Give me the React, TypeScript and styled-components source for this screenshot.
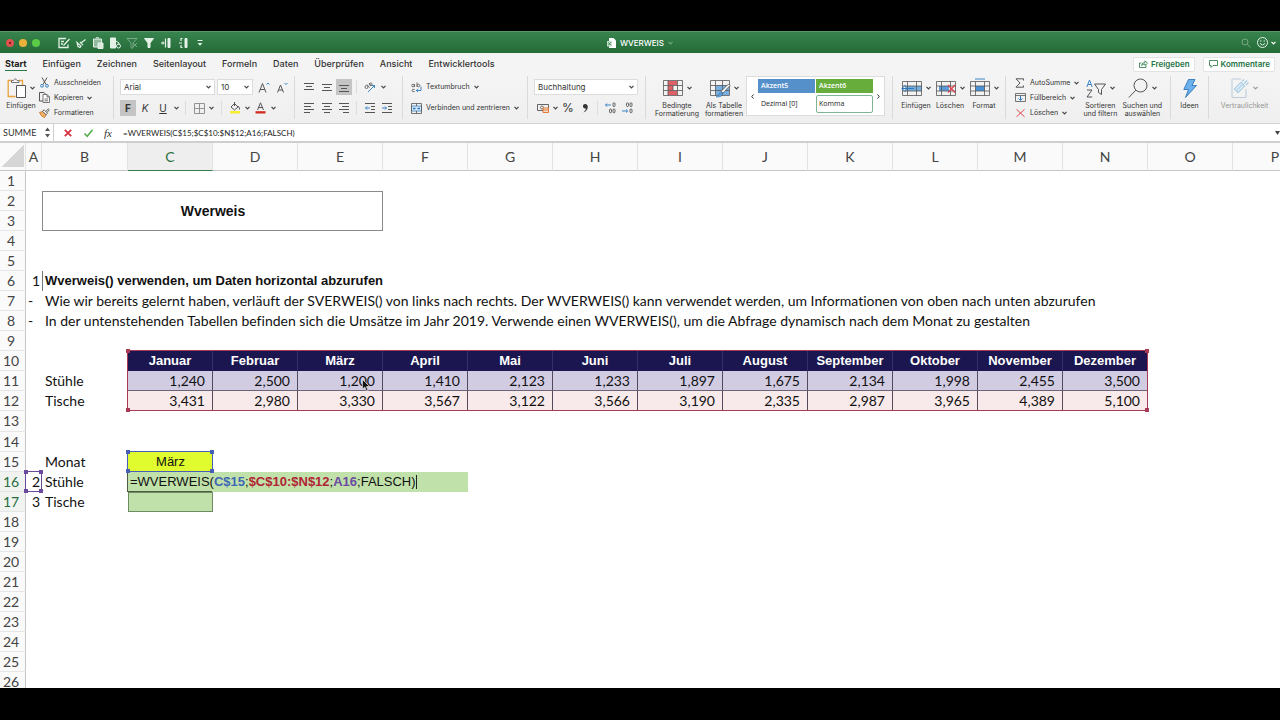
import React from "react";
import styled, { createGlobalStyle, css } from "styled-components";

const UI = `Inter, Roboto, "Liberation Sans", sans-serif`;
const BODY = `Lato, "Open Sans", sans-serif`;
const ARIAL = `"Liberation Sans", Arial, sans-serif`;
const COL = 85;
const ROW = 20;

const GlobalStyle = createGlobalStyle`
  *, *::before, *::after { box-sizing: border-box; }
  body { margin: 0; background: #000; font-family: ${UI}; color: #333; }
  button, select, input { font: inherit; color: inherit; margin: 0; padding: 0; border: 0; background: none; }
  svg { display: block; flex: none; overflow: visible; }
`;

const Screen = styled.div`
  height: 100vh;
  padding: 31px 0 32px;
  display: flex;
  flex-direction: column;
  overflow: hidden;
`;

/* ---------- title bar ---------- */

const TitleBar = styled.header`
  flex: none;
  height: 22px;
  display: grid;
  grid-template-columns: 1fr auto 1fr;
  align-items: center;
  background: linear-gradient(#38834e, #246b38);
  border-top: 1px solid #5a9a6b;
  color: #fff;
`;
const TitleLeft = styled.div`
  display: flex;
  align-items: center;
`;
const Lights = styled.div`
  display: flex;
  gap: 5px;
  padding: 0 15px 0 6px;
`;
const Light = styled.button<{ $color: string }>`
  width: 8px;
  height: 8px;
  border-radius: 50%;
  background: ${(p) => p.$color};
  display: grid;
  place-items: center;
`;
const QuickButton = styled.button<{ $dim?: boolean }>`
  width: 17px;
  height: 16px;
  display: grid;
  place-items: center;
  color: #e4f1e7;
  opacity: ${(p) => (p.$dim ? 0.4 : 1)};
`;
const DocTitle = styled.div`
  display: flex;
  align-items: center;
  gap: 4px;
  font-size: 8px;
  font-weight: 500;
  line-height: 12px;
`;
const TitleRight = styled.div`
  display: flex;
  justify-content: flex-end;
  align-items: center;
  padding-right: 4px;
`;

/* ---------- tabs ---------- */

const TabBar = styled.nav`
  flex: none;
  height: 22px;
  display: flex;
  align-items: center;
  gap: 16px;
  padding: 0 5px;
  background: #f4f4f4;
  font-size: 9px;
  font-weight: 500;
`;
const Tab = styled.button<{ $active?: boolean }>`
  height: 14px;
  line-height: 12px;
  white-space: nowrap;
  border-bottom: 1px solid ${(p) => (p.$active ? "#2b7a45" : "transparent")};
  ${(p) => p.$active && css`font-weight: 700; color: #222;`}
`;
const ShareArea = styled.div`
  margin-left: auto;
  display: flex;
  gap: 8px;
  font-size: 8px;
`;
const ShareButton = styled.button`
  height: 15px;
  padding: 0 4px 0 5px;
  display: flex;
  align-items: center;
  gap: 3px;
  background: #fff;
  border: 1px solid #e3e3e3;
  border-radius: 2px;
  color: #24733f;
  font-weight: 600;
  white-space: nowrap;
`;

/* ---------- ribbon ---------- */

const Ribbon = styled.div`
  flex: none;
  height: 49px;
  display: flex;
  padding: 1px 0 4px;
  background: linear-gradient(#f4f4f4, #efefef);
  border-bottom: 1px solid #d2d2d2;
  font-size: 8px;
  line-height: 10px;
`;
const Group = styled.section<{ $w: number; $pad?: number }>`
  flex: none;
  width: ${(p) => p.$w}px;
  display: flex;
  padding-left: ${(p) => p.$pad ?? 0}px;
  border-right: 1px solid #dadada;
`;
const LastGroup = styled.section`
  flex: 1;
  display: flex;
  justify-content: center;
`;
const Stack = styled.div<{ $gap?: number }>`
  display: flex;
  flex-direction: column;
  justify-content: center;
  gap: ${(p) => p.$gap ?? 4}px;
`;
const Line = styled.div`
  height: 17px;
  display: flex;
  align-items: center;
`;
const Slot = styled.button<{ $w: number; $on?: boolean; $size?: number }>`
  flex: none;
  width: ${(p) => p.$w}px;
  height: 16px;
  display: grid;
  place-items: center;
  font-size: ${(p) => p.$size ?? 10}px;
  background: ${(p) => (p.$on ? "#c4c4c4" : "none")};
`;
const Tick = styled.span<{ $m?: number }>`
  width: 1px;
  height: 14px;
  margin: 0 ${(p) => p.$m ?? 4}px;
  background: #dcdcdc;
`;
const BigButton = styled.button<{ $w: number; $faded?: boolean }>`
  flex: none;
  width: ${(p) => p.$w}px;
  padding-top: 1px;
  display: flex;
  flex-direction: column;
  align-items: center;
  gap: 3px;
  font-size: 7px;
  line-height: 8px;
  white-space: nowrap;
  opacity: ${(p) => (p.$faded ? 0.5 : 1)};
`;
const BigArt = styled.span`
  height: 22px;
  display: flex;
  align-items: center;
  gap: 4px;
`;
const TextButton = styled.button`
  height: 11px;
  display: flex;
  align-items: center;
  gap: 4px;
  font-size: 7px;
  white-space: nowrap;
`;
const IconSlot = styled.span`
  width: 12px;
  display: grid;
  place-items: center;
`;
const SelectWrap = styled.label<{ $w: number }>`
  position: relative;
  width: ${(p) => p.$w}px;
  margin-right: 2px;
  height: 16px;
  display: flex;
  align-items: center;
  background: #fff;
  border: 1px solid #dcdcdc;
  & > svg { position: absolute; right: 3px; pointer-events: none; }
`;
const Select = styled.select`
  appearance: none;
  width: 100%;
  height: 14px;
  padding-left: 3px;
  font-size: 8px;
  outline: none;
`;
const Gallery = styled.div`
  width: 139px;
  height: 40px;
  display: flex;
  background: #fff;
  border: 1px solid #dcdcdc;
`;
const GalleryItems = styled.div`
  flex: 1;
  display: grid;
  grid-template-columns: 1fr 1fr;
  grid-template-rows: 14px 18px;
  column-gap: 1px;
  row-gap: 2px;
  align-content: center;
`;
const Arrow = styled.button`
  width: 11px;
  display: grid;
  place-items: center;
`;
const StyleCell = styled.button<{ $bg?: string; $ring?: boolean }>`
  padding: 0 2px;
  text-align: left;
  font-size: 7px;
  line-height: 10px;
  font-family: "Open Sans", sans-serif;
  font-weight: ${(p) => (p.$bg ? 600 : 500)};
  color: ${(p) => (p.$bg ? "#fff" : "#222")};
  background: ${(p) => p.$bg ?? "#fff"};
  border: 1px solid ${(p) => (p.$ring ? "#7db592" : "transparent")};
  border-radius: ${(p) => (p.$ring ? 2 : 0)}px;
`;

/* ---------- formula bar ---------- */

const FormulaBar = styled.div`
  flex: none;
  height: 19px;
  display: flex;
  align-items: center;
  background: #fff;
  border-bottom: 2px solid #cfcfcf;
  font-size: 9px;
`;
const NameBox = styled.div`
  width: 54px;
  height: 17px;
  display: flex;
  align-items: center;
  justify-content: space-between;
  padding: 0 3px;
  border-right: 1px solid #cfcfcf;
`;
const NameInput = styled.input`
  width: 38px;
  outline: none;
  font-family: ${BODY};
`;
const FormulaTool = styled.button`
  width: 20px;
  height: 16px;
  display: grid;
  place-items: center;
`;
const FxLabel = styled.i`
  font: italic 11px/14px "Liberation Serif", serif;
`;
const FormulaTools = styled.div`
  display: flex;
  padding: 0 5px 0 4px;
`;
const FormulaInput = styled.input`
  flex: 1;
  min-width: 0;
  outline: none;
  color: #222;
  font-family: ${BODY};
  font-size: 8px;
`;

/* ---------- sheet ---------- */

const SheetArea = styled.main`
  flex: 1;
  min-height: 0;
  overflow: hidden;
  background: #fff;
`;
const Grid = styled.table`
  table-layout: fixed;
  border-collapse: separate;
  border-spacing: 0;
  font-family: ${BODY};
  font-size: 14px;
  font-variant-ligatures: none;
  line-height: 18px;
  color: #111;
  td, th { padding: 0; white-space: nowrap; }
`;
const ColHead = styled.th<{ $on?: boolean }>`
  height: 28px;
  font-weight: 400;
  color: ${(p) => (p.$on ? "#2a6e40" : "#444")};
  background: ${(p) => (p.$on ? "#eeeeee" : "#fafafa")};
  border-right: 1px solid #e2e2e2;
  border-bottom: 1px solid ${(p) => (p.$on ? "#2f7d48" : "#c6c6c6")};
`;
const Corner = styled(ColHead)`
  background: linear-gradient(135deg, #fafafa 50%, #d6d6d6 50%) 2px 2px / 22px 22px no-repeat #fafafa;
`;
const RowHead = styled.th<{ $on?: boolean; $tall?: boolean }>`
  height: ${(p) => (p.$tall ? ROW + 1 : ROW)}px;
  font-weight: 400;
  color: ${(p) => (p.$on ? "#2a6e40" : "#444")};
  background: ${(p) => (p.$on ? "#f0f3f0" : "#fafafa")};
  border-right: 1px solid #c6c6c6;
  border-bottom: 1px solid #e6e6e6;
  && { padding-right: 3px; }
`;
const Cell = styled.td<{ $align?: string }>`
  height: ${ROW}px;
  text-align: ${(p) => p.$align ?? "left"};
  && { padding: 0 2px 0 ${(p) => (p.$align === "right" ? 0 : 3)}px; }
`;
const IndexCell = styled(Cell)`
  position: relative;
`;
const DashCell = styled(Cell)`
  && { padding-left: 2px; }
`;
const BannerCell = styled(Cell)`
  border: 1px solid #8a8a8a;
  font: 700 14px/18px ${ARIAL};
`;
const HeadingCell = styled(Cell)`
  border-left: 1px solid #777;
  font: 700 13px/18px ${ARIAL};
  && { padding-left: 2px; }
`;
const MonthCell = styled.th`
  position: relative;
  height: ${ROW}px;
  font: 700 13px/18px ${ARIAL};
  color: #fff;
  background: #1b1650;
  border-right: 1px solid #35306c;
`;
const ValueCell = styled.td<{ $bg: string }>`
  position: relative;
  height: ${ROW}px;
  text-align: right;
  background: ${(p) => p.$bg};
  border-right: 1px solid #554a5c;
  border-bottom: 1px solid #6e6478;
  && { padding-right: 7px; }
`;
const LookupCell = styled.td`
  position: relative;
  text-align: center;
  font: 400 13px/18px ${ARIAL};
  background: #e0fb2e;
`;
const EditCell = styled.td`
  position: relative;
  height: ${ROW}px;
  font: 400 13px/18px ${ARIAL};
  background: #c1e1ab;
  && { padding-left: 2px; }
`;
const ResultCell = styled.td`
  background: #c1e1ab;
  border: 1px solid #6f8a62;
`;
const Ref = styled.b<{ $c: string }>`
  color: ${(p) => p.$c};
`;
const Caret = styled.span`
  display: inline-block;
  width: 1px;
  height: 14px;
  vertical-align: -3px;
  background: #222;
`;
const Marquee = styled.span<{ $c: string; $cols?: number; $rows?: number; $w?: number }>`
  position: absolute;
  z-index: 1;
  top: -1px;
  left: -1px;
  width: ${(p) => (p.$w ?? (p.$cols ?? 1) * COL) + 1}px;
  height: ${(p) => (p.$rows ?? 1) * ROW + 1}px;
  border: 1px solid ${(p) => p.$c};
  pointer-events: none;
`;
const Handle = styled.i<{ $c: string; $x: "left" | "right"; $y: "top" | "bottom" }>`
  position: absolute;
  ${(p) => p.$x}: -2px;
  ${(p) => p.$y}: -2px;
  width: 4px;
  height: 4px;
  background: ${(p) => p.$c};
`;
const ActiveFrame = styled.span`
  position: absolute;
  top: 0;
  left: -1px;
  width: ${COL}px;
  height: ${ROW}px;
  border: 1px solid #4b5d44;
  border-top: 0;
  border-right: 0;
  pointer-events: none;
`;
const Pointer = styled.span`
  position: absolute;
  left: 64px;
  top: 8px;
  z-index: 2;
`;

/* ---------- icons ---------- */

const Chev = ({ c = "#444" }: { c?: string }) => (
  <svg width="5" height="4" viewBox="0 0 5 4" fill="none" stroke={c} strokeWidth="1.2">
    <path d="M.5 .8 2.5 2.8 4.5 .8" />
  </svg>
);

const Art = ({ w, h, children }: { w: number; h: number; children: React.ReactNode }) => (
  <svg width={w} height={h} viewBox={`0 0 ${w} ${h}`} fill="none" stroke="#555" strokeWidth="1">
    {children}
  </svg>
);

const Bars = ({ rows, blue }: { rows: [number, number, number][]; blue?: React.ReactNode }) => (
  <Art w={10} h={10}>
    {rows.map(([x1, x2, y]) => (
      <path key={y} d={`M${x1} ${y}H${x2}`} />
    ))}
    {blue}
  </Art>
);

const PasteIcon = () => (
  <Art w={19} h={20}>
    <path d="M5 2.500H1.200V18.500H8.500M12 2.500H15.500V7" stroke="#e9a23c" strokeWidth="1.300" />
    <path d="M4.500 4.500V2.500H6.500Q8.300 -.8 10 2.500H12V4.500Z" fill="#f4f4f4" stroke="#777" />
    <path d="M9.500 7.500H18.500V19.500H9.500Z" fill="#fff" />
  </Art>
);
const CutIcon = () => (
  <Art w={9} h={11}>
    <path d="M2 .5 6 7.500M7 .5 3 7.500" />
    <circle cx="2" cy="8.800" r="1.400" stroke="#3d86c6" />
    <circle cx="7" cy="8.800" r="1.400" stroke="#3d86c6" />
  </Art>
);
const CopyIcon = () => (
  <Art w={11} h={11}>
    <path d="M4 9H.5V.5H5L6.500 2" />
    <path d="M4 2.500H8L10.500 5V10.500H4ZM8 2.500V5H10.500M5.500 7H9M5.500 8.800H9" fill="#fff" strokeWidth=".8" />
  </Art>
);
const BrushIcon = () => (
  <Art w={11} h={10}>
    <path d="M.5 4.500 3.500 3.500 7 7 5.500 9.500Q2.500 9 .5 4.500Z" fill="#f1b36a" stroke="#d07d30" />
    <path d="M3.500 3.200 5.200 1.800 8.500 5.200 7.200 6.800ZM7 3.500 9.200 .8 10.300 1.800 8 4.500" fill="#fff" strokeWidth=".9" />
  </Art>
);
const GridIcon = ({ children, overlay }: { children?: React.ReactNode; overlay?: React.ReactNode }) => (
  <Art w={20} h={18}>
    {children}
    <path d="M.5 2.500H19.500V16.500H.5ZM.5 7H19.500M.5 12H19.500M5.500 2.500V16.500M14.500 2.500V16.500" strokeWidth=".8" />
    {overlay}
  </Art>
);
const ConditionalIcon = () => (
  <Art w={20} h={18}>
    <path d="M5 2H14V6H5ZM5 6.500H10V11.500H5ZM5 12H14V16H5Z" fill="#dd5f68" stroke="none" />
    <path d="M.5 1.500H19.500V16.500H.5ZM.5 6.500H19.500M.5 11.500H19.500M5 1.500V16.500M14.500 1.500V16.500M10 6.500V11.500" strokeWidth=".8" />
  </Art>
);
const TableFormatIcon = () => (
  <Art w={20} h={18}>
    <path d="M5.500 6.500H19V16H5.500Z" fill="#79afe0" stroke="none" />
    <path d="M.5 1.500H19.500V16.500H.5ZM.5 6.500H19.500M.5 11.500H19.500M5.500 1.500V16.500M12.500 1.500V16.500" strokeWidth=".8" />
    <path d="M18.500 5 20 6.500 13 14 11 12.500Z" fill="#fff" strokeWidth=".8" />
    <path d="M6 18Q9 17 9 14.500 10 12.500 12.500 14.500 13 18 6 18Z" fill="#5a9bd8" stroke="#3d78b4" strokeWidth=".6" />
  </Art>
);
const InsertIcon = () => (
  <GridIcon overlay={<path d="M12 9.500H0M3.500 6 0 9.500 3.500 13" stroke="#2f78bd" />}>
    <path d="M3 7H20V12H3Z" fill="#74ade0" stroke="none" />
  </GridIcon>
);
const DeleteIcon = () => (
  <GridIcon overlay={<path d="M12 6 19 13.500M19 6 12 13.500" stroke="#dc4450" strokeWidth="1.300" />}>
    <path d="M3 7H13V12H3Z" fill="#5a9bd8" stroke="none" />
  </GridIcon>
);
const FormatIcon = () => (
  <GridIcon overlay={<path d="M5 0H15" stroke="#3d86c6" />}>
    <path d="M5.500 7H14.500V12H5.500Z" fill="#4a92d8" stroke="none" />
  </GridIcon>
);
const SigmaIcon = () => (
  <Art w={10} h={10}>
    <path d="M8.500 2.500V.8H1L5 5 1 9.200H8.500V7.500" />
  </Art>
);
const FillIcon = () => (
  <Art w={11} h={9}>
    <path d="M.5 .5H10.500V8.500H.5ZM.5 2.500H10.500" strokeWidth=".8" />
    <path d="M5.500 3V7.200M3.500 5.500 5.500 7.300 7.500 5.500" stroke="#2f78bd" />
  </Art>
);
const ClearIcon = () => (
  <Art w={9} h={8}>
    <path d="M.5 .3 8.500 7.800M8.500 .3 .5 7.800" stroke="#dc4450" />
  </Art>
);
const SortIcon = () => (
  <Art w={20} h={19}>
    <path d="M.8 8 3.500 1 6.200 8M1.800 5.500H5.200" stroke="#3d86c6" />
    <path d="M1 11H6L1 18H6.200" />
    <path d="M8.500 5H19.500L15.500 10.500V15.500L12.500 13.500V10.500Z" />
  </Art>
);
const SearchIcon = () => (
  <Art w={20} h={20}>
    <circle cx="12.500" cy="7.500" r="6.500" />
    <path d="M7.800 12.200 .8 19.500" />
  </Art>
);
const BoltIcon = () => (
  <Art w={14} h={19}>
    <path d="M5.500 .5H12L9 6.500H13.500L2.500 18.500 5.500 10.500H.8Z" fill="#6cb0ec" stroke="#3d7fbf" />
  </Art>
);
const SensitivityIcon = () => (
  <Art w={18} h={20}>
    <path d="M10 1H1V19.500H15V11" stroke="#8aa9c4" />
    <path d="M3 11 10 4 14 8 7 15Z" fill="#8cc5e8" stroke="#6aaedb" />
    <path d="M5 11 10 6M7 13 12 8" stroke="#fff" strokeWidth=".8" />
    <path d="M11 3.500 13 1.500M13 5.500 16 2.500M15 7 17.500 4.500" stroke="#6aaedb" strokeWidth="1.500" />
  </Art>
);
const BordersIcon = () => (
  <Art w={11} h={11}>
    <path d="M.5 .5H10.500V10.500H.5ZM5.500 .5V10.500M.5 5.500H10.500" stroke="#888" strokeWidth=".9" />
  </Art>
);
const BucketIcon = () => (
  <Art w={12} h={12}>
    <path d="M2 5 5.500 1.500 9 5 5.500 8Z M5.500 0V4M9 4Q11 6 10.500 7.500" />
    <path d="M1 9H11V11.500H1Z" fill="#f6ee2f" stroke="none" />
  </Art>
);
const FontColorIcon = () => (
  <Art w={11} h={12}>
    <path d="M2.500 8 5.500 .8 8.500 8M3.500 5.500H7.500" />
    <path d="M.5 9.200H10.500V11.500H.5Z" fill="#d4291f" stroke="none" />
  </Art>
);
const FontStep = ({ big }: { big?: boolean }) => (
  <Art w={12} h={11}>
    {big ? <path d="M1 10.500 4.500 1.500 8 10.500M2.200 7.500H6.800" /> : <path d="M1.500 10.500 4.500 3 7.500 10.500M2.500 8H6.500" />}
    <path d={big ? "M8.500 2.500 10 1 11.500 2.500" : "M8.500 1 10 2.500 11.500 1"} stroke="#3d86c6" />
  </Art>
);
const OrientIcon = () => (
  <Art w={12} h={11}>
    <circle cx="2.500" cy="5" r="1.500" strokeWidth=".8" />
    <path d="M3 2.500 5.500 5.500M5 1 7.500 4" strokeWidth=".8" />
    <circle cx="6.800" cy="2.300" r="1.300" strokeWidth=".8" />
    <path d="M4 10 10.500 3.500M8 3.500H10.500V6" stroke="#3d86c6" />
  </Art>
);
const WrapIcon = () => (
  <Art w={11} h={11}>
    <circle cx="2" cy="3.500" r="1.300" strokeWidth=".8" />
    <path d="M3.500 2V5M6 .3V5M3.700 7.500Q1 6.500 1 8.500T3.700 9.500" strokeWidth=".8" />
    <circle cx="7.500" cy="3.500" r="1.300" strokeWidth=".8" />
    <path d="M10 4.500V8.500H5.500M7 6.800 5.300 8.500 7 10.200" stroke="#3d86c6" />
  </Art>
);
const MergeIcon = () => (
  <Art w={11} h={11}>
    <path d="M.5 3H10.500V8H.5Z" fill="#d4e7f8" stroke="#3d86c6" strokeWidth=".8" />
    <path d="M.5 .5H10.500V10.500H.5ZM5.500 .5V3M5.500 8V10.500" strokeWidth=".8" />
    <path d="M2 5.500H4.500M6.500 5.500H9" stroke="#2f78bd" strokeWidth="1.400" />
  </Art>
);
const MoneyIcon = () => (
  <Art w={12} h={10}>
    <path d="M.5 1.500H11.500V7.500H.5Z" strokeWidth=".9" />
    <circle cx="5" cy="4.500" r="1.500" strokeWidth=".8" />
    <path d="M6 5H11.500V9.500H6ZM6 7H11.500" fill="#fbe3cf" stroke="#e07b39" />
  </Art>
);
const DecimalIcon = ({ less }: { less?: boolean }) => (
  <Art w={12} h={12}>
    <g strokeWidth=".9">
      <rect x={less ? 4.500 : 8} y=".8" width="2" height="3.800" rx="1" />
      {less && <rect x="8" y=".8" width="2" height="3.800" rx="1" />}
      <rect x="8" y="7" width="2" height="3.800" rx="1" />
      {!less && <rect x="4.500" y="7" width="2" height="3.800" rx="1" />}
    </g>
    <path d={less ? "M0 9H5.500M4 7.500 5.700 9 4 10.500" : "M6 3H.5M2.200 1.500 .5 3 2.200 4.500"} stroke="#3d86c6" />
  </Art>
);
const ExcelDocIcon = () => (
  <svg width="9" height="10" viewBox="0 0 9 10">
    <path d="M2 0H6.500L9 2.500V10H2Z" fill="#fff" />
    <path d="M0 3H5V8.500H0Z" fill="#c7dfcd" />
    <path d="M1.300 4.300 3.700 7.300M3.700 4.300 1.300 7.300" stroke="#2b7a45" strokeWidth=".8" />
  </svg>
);

const quick: { name: string; dim?: boolean; art: React.ReactNode }[] = [
  { name: "Bearbeiten", art: <path d="M8 1.500H1V10.500H10V7.500M3 4.500H6M3 7H5M5.500 8.500 11.500 2" strokeWidth="1.300" /> },
  { name: "Format übertragen", art: <path d="M2 5.500 6 9 5 10.500 3 9.500ZM6 6 10.500 2.500M5 5 8 8" strokeWidth="1.200" /> },
  { name: "Einfügen", art: <><path d="M1.500 2H9.500V10H1.500Z" fill="currentColor" fillOpacity=".55" /><path d="M4 .8H7M6 6H11V11.500H6Z" fill="#d9eadd" /></> },
  { name: "Inhalte einfügen", art: <><path d="M1.500 1H6.500V11H1.500Z" fill="currentColor" /><path d="M7 4 10 6V8" /><circle cx="9.500" cy="9" r="2" /></> },
  { name: "Filter löschen", dim: true, art: <path d="M1 1.500H11L7 6V11H5V6ZM7 6 11 10M11 6 7 10" /> },
  { name: "Filter", art: <path d="M1.500 1.500H10.500L7 6V10.500H5V6Z" fill="currentColor" /> },
  { name: "Zeilen gruppieren", art: <><path d="M8 1.500H10V10.500H8Z" fill="currentColor" /><path d="M5.500 1.500V10.500M1 6H4.500M3 4.500V7.500" strokeWidth="1.200" /></> },
  { name: "Gruppierung aufheben", art: <><path d="M8 1.500H10V10.500H8Z" fill="currentColor" /><path d="M5.500 1.500H4V4M4 8V10.500H5.500M2 6H5" strokeWidth="1.200" /></> },
  { name: "Anpassen", art: <><path d="M3.500 3.500H8.500" /><path d="M3.500 6H8.500L6 8.800Z" fill="currentColor" stroke="none" /></> },
];

/* ---------- data ---------- */

const letters = "ABCDEFGHIJKLMNOP".split("");
const columnWidth = (letter: string) => (letter === "A" ? 16 : letter === "B" ? COL + 1 : COL);
const HEADER_W = 26;
const sheetWidth = letters.reduce((sum, l) => sum + columnWidth(l), HEADER_W);

const tabs = ["Start", "Einfügen", "Zeichnen", "Seitenlayout", "Formeln", "Daten", "Überprüfen", "Ansicht", "Entwicklertools"];
const months = ["Januar", "Februar", "März", "April", "Mai", "Juni", "Juli", "August", "September", "Oktober", "November", "Dezember"];
const chairs = ["1,240", "2,500", "1,200", "1,410", "2,123", "1,233", "1,897", "1,675", "2,134", "1,998", "2,455", "3,500"];
const tables = ["3,431", "2,980", "3,330", "3,567", "3,122", "3,566", "3,190", "2,335", "2,987", "3,965", "4,389", "5,100"];
const RED = "#a83a55";
const BLUE = "#4560b4";
const PURPLE = "#6a4a9c";

const Selection = ({ color, cols, rows, width }: { color: string; cols?: number; rows?: number; width?: number }) => (
  <Marquee $c={color} $cols={cols} $rows={rows} $w={width}>
    <Handle $c={color} $x="left" $y="top" />
    <Handle $c={color} $x="right" $y="top" />
    <Handle $c={color} $x="left" $y="bottom" />
    <Handle $c={color} $x="right" $y="bottom" />
  </Marquee>
);

const rowContent: Record<number, React.ReactNode> = {
  2: <><Cell /><BannerCell colSpan={4} rowSpan={2} $align="center">Wverweis</BannerCell></>,
  6: <><Cell $align="right">1</Cell><HeadingCell colSpan={5}>Wverweis() verwenden, um Daten horizontal abzurufen</HeadingCell></>,
  7: <><DashCell>-</DashCell><Cell colSpan={14}>Wie wir bereits gelernt haben, verläuft der SVERWEIS() von links nach rechts. Der WVERWEIS() kann verwendet werden, um Informationen von oben nach unten abzurufen</Cell></>,
  8: <><DashCell>-</DashCell><Cell colSpan={14}>In der untenstehenden Tabellen befinden sich die Umsätze im Jahr 2019. Verwende einen WVERWEIS(), um die Abfrage dynamisch nach dem Monat zu gestalten</Cell></>,
  10: (
    <>
      <Cell /><Cell />
      {months.map((m, i) => (
        <MonthCell key={m} scope="col">{m}{i === 0 && <Selection color={RED} cols={12} rows={3} />}</MonthCell>
      ))}
    </>
  ),
  11: (
    <>
      <Cell /><Cell>Stühle</Cell>
      {chairs.map((v, i) => (
        <ValueCell key={i} $bg="#d2cce3">
          {v}
          {i === 2 && (
            <Pointer>
              <svg width="8" height="13" viewBox="0 0 8 13">
                <path d="M.5 .5V10L2.800 8 4.500 12 6 11.300 4.400 7.500H7.500Z" fill="#111" stroke="#eee" strokeWidth=".6" />
              </svg>
            </Pointer>
          )}
        </ValueCell>
      ))}
    </>
  ),
  12: (
    <>
      <Cell /><Cell>Tische</Cell>
      {tables.map((v, i) => <ValueCell key={i} $bg="#f8e9ea">{v}</ValueCell>)}
    </>
  ),
  15: <><Cell /><Cell>Monat</Cell><LookupCell>März<Selection color={BLUE} /></LookupCell></>,
  16: (
    <>
      <IndexCell $align="right">2<Selection color={PURPLE} width={16} /></IndexCell>
      <Cell>Stühle</Cell>
      <EditCell colSpan={4}>
        =WVERWEIS(<Ref $c="#3f68b5">C$15</Ref>;<Ref $c="#b02434">$C$10:$N$12</Ref>;<Ref $c="#6b4aa0">A16</Ref>;FALSCH)<Caret />
        <ActiveFrame />
      </EditCell>
    </>
  ),
  17: <><Cell $align="right">3</Cell><Cell>Tische</Cell><ResultCell /></>,
};

const Combo = ({ label, value, w }: { label: string; value: string; w: number }) => (
  <SelectWrap $w={w}>
    <Select aria-label={label} defaultValue={value}><option>{value}</option></Select>
    <Chev />
  </SelectWrap>
);

const Big = ({ w, icon, lines, chev = true, faded }: { w: number; icon: React.ReactNode; lines: string[]; chev?: boolean; faded?: boolean }) => (
  <BigButton $w={w} $faded={faded}>
    <BigArt>{icon}{chev && <Chev />}</BigArt>
    <span>{lines.map((l) => <React.Fragment key={l}>{l}<br /></React.Fragment>)}</span>
  </BigButton>
);

const Small = ({ icon, label, chev }: { icon: React.ReactNode; label: string; chev?: boolean }) => (
  <TextButton><IconSlot>{icon}</IconSlot>{label}{chev && <Chev />}</TextButton>
);

export default function App() {
  return (
    <Screen>
      <GlobalStyle />
      <TitleBar>
        <TitleLeft>
          <Lights>
            <Light $color="#e0524d" aria-label="Schließen"><svg width="2" height="2"><circle cx="1" cy="1" r="1" fill="#5d0d0b" /></svg></Light>
            <Light $color="#eab13a" aria-label="Minimieren" />
            <Light $color="#5bcb45" aria-label="Vollbild" />
          </Lights>
          {quick.map((q) => (
            <QuickButton key={q.name} aria-label={q.name} $dim={q.dim}>
              <svg width="12" height="12" viewBox="0 0 12 12" fill="none" stroke="currentColor">{q.art}</svg>
            </QuickButton>
          ))}
        </TitleLeft>
        <DocTitle><ExcelDocIcon />WVERWEIS<Chev c="#6fa77e" /></DocTitle>
        <TitleRight>
          <QuickButton $dim aria-label="Suchen">
            <svg width="10" height="10" viewBox="0 0 10 10" fill="none" stroke="currentColor"><circle cx="4" cy="4" r="3" /><path d="M6.200 6.200 9.500 9.500" /></svg>
          </QuickButton>
          <QuickButton aria-label="Feedback">
            <svg width="11" height="11" viewBox="0 0 11 11" fill="none" stroke="currentColor">
              <circle cx="5.500" cy="5.500" r="5" />
              <path d="M3 6.500Q5.500 9.500 8 6.500M3.800 3.300V4.700M7.200 3.300V4.700" />
            </svg>
          </QuickButton>
          <Chev c="#fff" />
        </TitleRight>
      </TitleBar>

      <TabBar>
        {tabs.map((t, i) => <Tab key={t} $active={i === 0}>{t}</Tab>)}
        <ShareArea>
          <ShareButton>
            <svg width="9" height="8" viewBox="0 0 9 8" fill="none" stroke="currentColor" strokeWidth=".8"><path d="M2.500 3H.5V7.500H7V5.500M2.500 5.500Q3 2.500 6 2.500V.8L8.500 3.300 6 5.500V4Q4 4 2.500 5.500Z" /></svg>
            Freigeben
          </ShareButton>
          <ShareButton>
            <svg width="9" height="8" viewBox="0 0 9 8" fill="none" stroke="currentColor" strokeWidth=".8"><path d="M.5 .5H8.500V5.500H4L2 7.500V5.500H.5Z" /></svg>
            Kommentare
          </ShareButton>
        </ShareArea>
      </TabBar>

      <Ribbon>
        <Group $w={114} $pad={4}>
          <Big w={34} icon={<PasteIcon />} lines={["Einfügen"]} />
          <Stack>
            <Small icon={<CutIcon />} label="Ausschneiden" />
            <Small icon={<CopyIcon />} label="Kopieren" chev />
            <Small icon={<BrushIcon />} label="Formatieren" />
          </Stack>
        </Group>

        <Group $w={181} $pad={6}>
          <Stack>
            <Line>
              <Combo label="Schriftart" value="Arial" w={95} />
              <Combo label="Schriftgrad" value="10" w={36} />
              <Slot $w={18} aria-label="Schrift vergrößern"><FontStep big /></Slot>
              <Slot $w={18} aria-label="Schrift verkleinern"><FontStep /></Slot>
            </Line>
            <Line>
              <Slot $w={16} $on><b>F</b></Slot>
              <Slot $w={18}><i>K</i></Slot>
              <Slot $w={18}><u>U</u></Slot>
              <Slot $w={8} aria-label="Unterstreichung"><Chev /></Slot>
              <Tick $m={5} />
              <Slot $w={16} aria-label="Rahmen"><BordersIcon /></Slot>
              <Slot $w={8} aria-label="Rahmenart"><Chev /></Slot>
              <Tick $m={6} />
              <Slot $w={14} aria-label="Füllfarbe"><BucketIcon /></Slot>
              <Slot $w={10} aria-label="Füllfarbe wählen"><Chev /></Slot>
              <Slot $w={16} aria-label="Schriftfarbe"><FontColorIcon /></Slot>
              <Slot $w={10} aria-label="Schriftfarbe wählen"><Chev /></Slot>
            </Line>
          </Stack>
        </Group>

        <Group $w={108} $pad={5}>
          <Stack>
            <Line>
              <Slot $w={18} aria-label="Oben"><Bars rows={[[0, 10, 1.5], [2, 8, 4.5], [0, 10, 7.5]]} /></Slot>
              <Slot $w={18} aria-label="Mitte"><Bars rows={[[0, 10, 2.5], [2, 8, 5.5], [0, 10, 8.5]]} /></Slot>
              <Slot $w={16} $on aria-label="Unten"><Bars rows={[[0, 10, 3.5], [2, 8, 6.5], [0, 10, 9.5]]} /></Slot>
              <Tick />
              <Slot $w={18} aria-label="Ausrichtung"><OrientIcon /></Slot>
              <Slot $w={8} aria-label="Winkel"><Chev /></Slot>
            </Line>
            <Line>
              <Slot $w={18} aria-label="Links"><Bars rows={[[0, 10, 0.5], [0, 7, 3.5], [0, 10, 6.5], [0, 6, 9.5]]} /></Slot>
              <Slot $w={18} aria-label="Zentriert"><Bars rows={[[0, 10, 0.5], [2, 8, 3.5], [0, 10, 6.5], [2, 8, 9.5]]} /></Slot>
              <Slot $w={16} aria-label="Rechts"><Bars rows={[[0, 10, 0.5], [3, 10, 3.5], [0, 10, 6.5], [4, 10, 9.5]]} /></Slot>
              <Tick />
              <Slot $w={18} aria-label="Einzug verkleinern"><Bars rows={[[0, 10, 0.5], [6, 10, 3.5], [6, 10, 6.5], [0, 10, 9.5]]} blue={<path d="M5 5H.5M2 3.500 .5 5 2 6.500" stroke="#3d86c6" />} /></Slot>
              <Slot $w={16} aria-label="Einzug vergrößern"><Bars rows={[[0, 10, 0.5], [6, 10, 3.5], [6, 10, 6.5], [0, 10, 9.5]]} blue={<path d="M0 5H4.500M3 3.500 4.500 5 3 6.500" stroke="#3d86c6" />} /></Slot>
            </Line>
          </Stack>
        </Group>

        <Group $w={125} $pad={7}>
          <Stack $gap={10}>
            <Small icon={<WrapIcon />} label="Textumbruch" chev />
            <Small icon={<MergeIcon />} label="Verbinden und zentrieren" chev />
          </Stack>
        </Group>

        <Group $w={118} $pad={6}>
          <Stack>
            <Line><Combo label="Zahlenformat" value="Buchhaltung" w={104} /></Line>
            <Line>
              <Slot $w={17} aria-label="Währung"><MoneyIcon /></Slot>
              <Slot $w={8} aria-label="Währung wählen"><Chev /></Slot>
              <Slot $w={18} $size={12}>%</Slot>
              <Slot $w={16} aria-label="Tausendertrennzeichen">
                <svg width="5" height="9" viewBox="0 0 5 9"><path d="M2.300 0A2.200 2.200 0 0 0 2 4.400Q3 4.400 3 4.200 3 6.500 .5 8.500 4.800 6.500 4.800 2.500 4.600 0 2.300 0Z" fill="#333" /></svg>
              </Slot>
              <Tick />
              <Slot $w={17} aria-label="Dezimalstelle hinzufügen"><DecimalIcon /></Slot>
              <Slot $w={17} aria-label="Dezimalstelle löschen"><DecimalIcon less /></Slot>
            </Line>
          </Stack>
        </Group>

        <Group $w={247} $pad={6}>
          <Big w={50} icon={<ConditionalIcon />} lines={["Bedingte", "Formatierung"]} />
          <Big w={44} icon={<TableFormatIcon />} lines={["Als Tabelle", "formatieren"]} />
          <Gallery>
            <Arrow aria-label="Zurück"><svg width="3" height="5" fill="none" stroke="#333"><path d="M2.500 .5 .8 2.500 2.500 4.500" /></svg></Arrow>
            <GalleryItems>
              <StyleCell $bg="#5590cb">Akzent5</StyleCell>
              <StyleCell $bg="#67ad3b">Akzent6</StyleCell>
              <StyleCell>Dezimal [0]</StyleCell>
              <StyleCell $ring>Komma</StyleCell>
            </GalleryItems>
            <Arrow aria-label="Weiter"><svg width="3" height="5" fill="none" stroke="#333"><path d="M.5 .5 2.200 2.500 .5 4.500" /></svg></Arrow>
          </Gallery>
        </Group>

        <Group $w={113} $pad={6}>
          <Big w={34} icon={<InsertIcon />} lines={["Einfügen"]} />
          <Big w={34} icon={<DeleteIcon />} lines={["Löschen"]} />
          <Big w={34} icon={<FormatIcon />} lines={["Format"]} />
        </Group>

        <Group $w={165} $pad={8}>
          <Stack>
            <Small icon={<SigmaIcon />} label="AutoSumme" chev />
            <Small icon={<FillIcon />} label="Füllbereich" chev />
            <Small icon={<ClearIcon />} label="Löschen" chev />
          </Stack>
          <Big w={42} icon={<SortIcon />} lines={["Sortieren", "und filtern"]} />
          <Big w={42} icon={<SearchIcon />} lines={["Suchen und", "auswählen"]} />
        </Group>

        <Group $w={38}>
          <Big w={37} icon={<BoltIcon />} lines={["Ideen"]} chev={false} />
        </Group>
        <LastGroup>
          <Big w={60} icon={<SensitivityIcon />} lines={["Vertraulichkeit"]} faded />
        </LastGroup>
      </Ribbon>

      <FormulaBar>
        <NameBox>
          <NameInput aria-label="Namenfeld" defaultValue="SUMME" />
          <svg width="5" height="11" viewBox="0 0 5 11" fill="#555"><path d="M0 4 2.500 .5 5 4ZM0 7 2.500 10.500 5 7Z" /></svg>
        </NameBox>
        <FormulaTools>
          <FormulaTool aria-label="Abbrechen"><svg width="8" height="8" fill="none" stroke="#d5313f" strokeWidth="1.800"><path d="M.8 .8 7.200 7.200M7.200 .8 .8 7.200" /></svg></FormulaTool>
          <FormulaTool aria-label="Eingeben"><svg width="9" height="8" fill="none" stroke="#55b04c" strokeWidth="1.600"><path d="M.5 4.500 3.200 7.200 8.500 .8" /></svg></FormulaTool>
          <FormulaTool aria-label="Funktion einfügen"><FxLabel>fx</FxLabel></FormulaTool>
        </FormulaTools>
        <FormulaInput aria-label="Formel" defaultValue="=WVERWEIS(C$15;$C$10:$N$12;A16;FALSCH)" />
        <svg width="5" height="4" viewBox="0 0 5 4" fill="#444"><path d="M0 0H5L2.500 4Z" /></svg>
      </FormulaBar>

      <SheetArea>
        <Grid style={{ width: sheetWidth }}>
          <colgroup>
            <col style={{ width: HEADER_W }} />
            {letters.map((l) => <col key={l} style={{ width: columnWidth(l) }} />)}
          </colgroup>
          <thead>
            <tr>
              <Corner aria-label="Alles auswählen" />
              {letters.map((l) => <ColHead key={l} scope="col" $on={l === "C"}>{l}</ColHead>)}
            </tr>
          </thead>
          <tbody>
            {Array.from({ length: 26 }, (_, i) => i + 1).map((n) => (
              <tr key={n}>
                <RowHead scope="row" $on={n === 16 || n === 17} $tall={n === 13}>{n}</RowHead>
                {rowContent[n]}
              </tr>
            ))}
          </tbody>
        </Grid>
      </SheetArea>
    </Screen>
  );
}
